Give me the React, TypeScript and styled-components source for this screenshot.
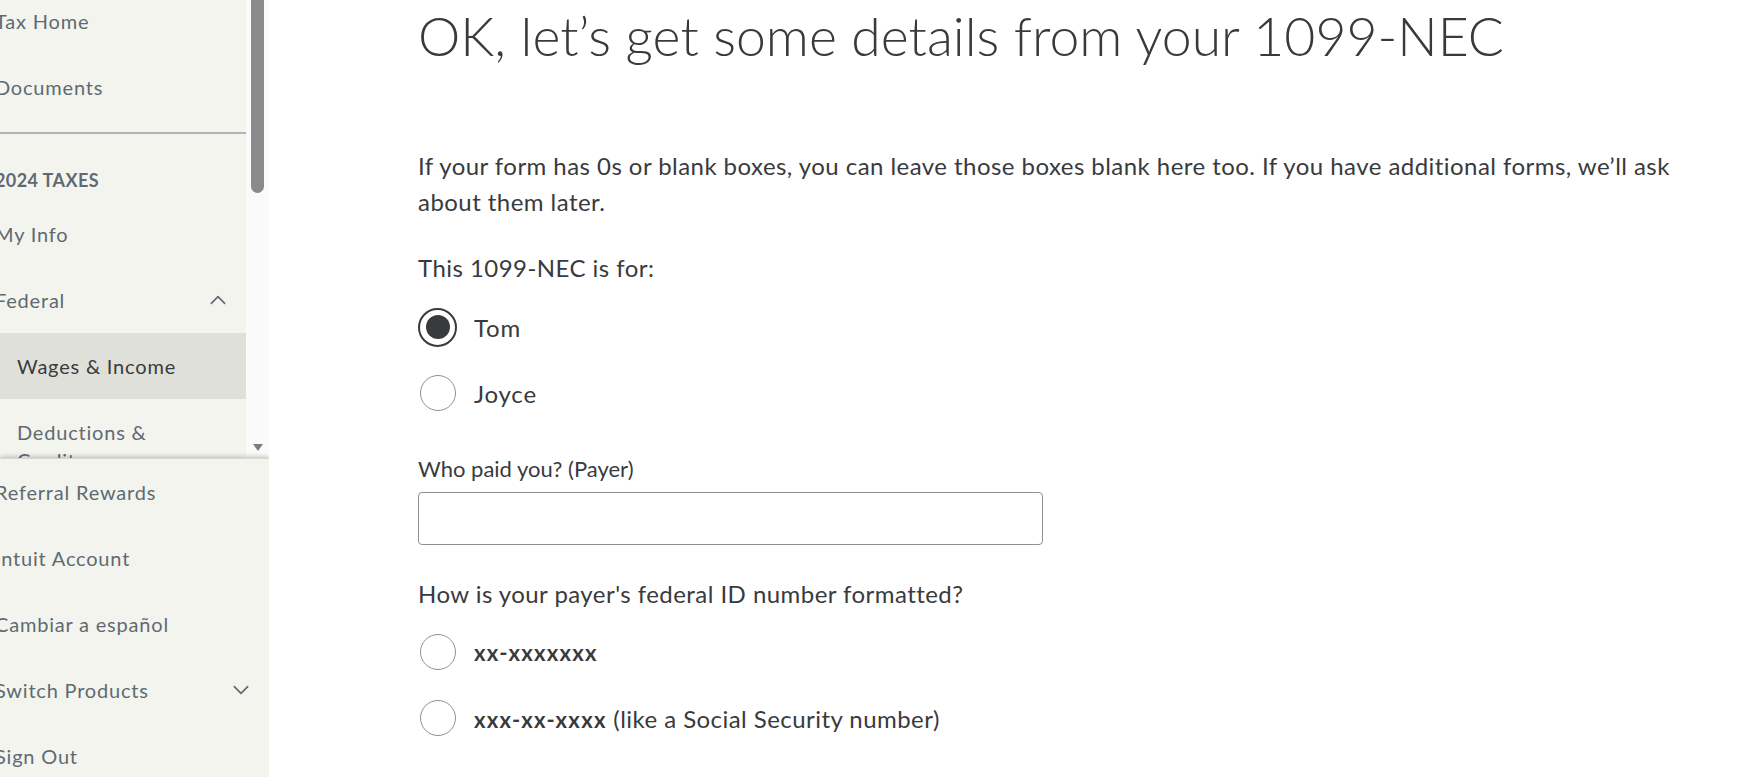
import styled, { createGlobalStyle, css } from "styled-components";

const GlobalStyle = createGlobalStyle`
  body {
    margin: 0;
    font-family: Lato, "Liberation Sans", sans-serif;
    color: #393a3d;
    background: #ffffff;
    overflow: hidden;
  }
`;

const Page = styled.div`
  display: flex;
  height: 100vh;
  overflow: hidden;
`;

/* ---------- sidebar ---------- */

const Sidebar = styled.aside`
  width: 269px;
  flex: none;
  display: flex;
  flex-direction: column;
  background: #f4f4ef;
  overflow: hidden;
`;

const NavScroll = styled.div`
  flex: 0 0 458px;
  display: flex;
  overflow: hidden;
`;

const NavList = styled.ul`
  flex: 1;
  list-style: none;
  margin: -12px 0 0 -5px;
  padding: 0;
`;

const ScrollTrack = styled.div`
  width: 23px;
  flex: none;
  background: #fafafa;
  display: flex;
  flex-direction: column;
  align-items: center;
  justify-content: space-between;
  padding-bottom: 7px;
  box-sizing: border-box;
`;

const Thumb = styled.div`
  width: 13px;
  height: 193px;
  background: #8a8a8a;
  border-radius: 0 0 7px 7px;
`;

const DownArrow = styled.div`
  width: 0;
  height: 0;
  border-left: 5px solid transparent;
  border-right: 5px solid transparent;
  border-top: 7px solid #7d7d7d;
`;

const NavItem = styled.li<{ $indent?: boolean; $active?: boolean }>`
  display: flex;
  align-items: center;
  justify-content: space-between;
  height: 66px;
  padding: 0 18px 0 ${(p) => (p.$indent ? "22px" : "0")};
  font-size: 20px;
  letter-spacing: 0.8px;
  color: #5e6a73;
  white-space: nowrap;
  overflow: hidden;

  ${(p) =>
    p.$active &&
    css`
      background: #e0e0da;
      color: #393a3d;
      margin-left: 5px;
      padding-left: 17px;
    `}
`;

const WrapItem = styled.li`
  height: 66px;
  box-sizing: border-box;
  padding: 19px 70px 0 22px;
  font-size: 20px;
  letter-spacing: 0.8px;
  line-height: 28px;
  color: #5e6a73;
`;

const Divider = styled.li`
  height: 2px;
  background: #aab5bc;
  margin: 12px 0 0 0;
`;

const SectionTitle = styled.li`
  padding: 35px 0 10px;
  line-height: 22px;
  font-size: 18px;
  font-weight: 700;
  letter-spacing: 0.4px;
  color: #5e6a73;
`;

const BottomNav = styled.ul`
  list-style: none;
  margin: 0;
  padding: 0;
  flex: none;
  position: relative;
  box-shadow: 0 -2px 4px rgba(0, 0, 0, 0.18);
  border-top: 1px solid #d6d6d2;

  & > li {
    margin-left: -5px;
    padding-right: 18px;
  }
`;

const Chevron = ({ up }: { up?: boolean }) => (
  <svg width="20" height="20" viewBox="0 0 24 24" fill="none">
    <path
      d={up ? "M4 16l8-8 8 8" : "M4 8l8 8 8-8"}
      stroke="#5e6a73"
      strokeWidth="2"
      strokeLinecap="round"
      strokeLinejoin="round"
    />
  </svg>
);

/* ---------- main ---------- */

const Main = styled.main`
  flex: 1;
  padding: 3px 40px 0 149px;
  min-width: 0;
`;

const Content = styled.div`
  max-width: 1280px;
`;

const Heading = styled.h1`
  margin: 0;
  font-size: 53.5px;
  line-height: 64px;
  font-weight: 300;
  color: #393a3d;
`;

const Intro = styled.p`
  margin: 81px 0 0;
  font-size: 24px;
  line-height: 36px;
  letter-spacing: 0.45px;
  font-weight: 400;
`;

const Question = styled.div<{ $gap: number }>`
  margin-top: ${(p) => p.$gap}px;
  font-size: 24px;
  line-height: 30px;
  letter-spacing: 0.45px;
`;

const RadioGroup = styled.div<{ $gap: number }>`
  margin-top: ${(p) => p.$gap}px;
  display: flex;
  flex-direction: column;
`;

const RadioRow = styled.label`
  display: flex;
  align-items: center;
  gap: 17px;
  height: 66px;
  font-size: 24px;
  letter-spacing: 0.45px;
`;

const RadioBox = styled.span`
  width: 39px;
  height: 39px;
  display: flex;
  align-items: center;
  justify-content: center;
  flex: none;
`;

const RadioCircle = styled.span<{ $checked?: boolean }>`
  box-sizing: border-box;
  border-radius: 50%;
  display: flex;
  align-items: center;
  justify-content: center;
  ${(p) =>
    p.$checked
      ? css`
          width: 39px;
          height: 39px;
          border: 2px solid #393a3d;
        `
      : css`
          width: 36px;
          height: 36px;
          border: 1px solid #8d9096;
        `}
`;

const RadioDot = styled.span`
  width: 24px;
  height: 24px;
  border-radius: 50%;
  background: #393a3d;
`;

const NameLabel = styled.span`
  letter-spacing: 0.8px;
`;

const Code = styled.b`
  font-weight: 700;
  font-size: 22px;
  letter-spacing: 1.3px;
`;

const FieldLabel = styled.div`
  margin-top: 31px;
  font-size: 22px;
  line-height: 24px;
`;

const TextInput = styled.input`
  display: block;
  margin-top: 11px;
  width: 625px;
  height: 53px;
  box-sizing: border-box;
  border: 1px solid #8d9096;
  border-radius: 4px;
  background: #fff;
  font: inherit;
  padding: 0 12px;
`;

const Radio = ({ checked, children }: { checked?: boolean; children: React.ReactNode }) => (
  <RadioRow>
    <RadioBox>
      <RadioCircle $checked={checked}>{checked && <RadioDot />}</RadioCircle>
    </RadioBox>
    {children}
  </RadioRow>
);

const App = () => {
  return (
    <>
      <GlobalStyle />
      <Page>
        <Sidebar>
          <NavScroll>
            <NavList>
              <NavItem>Tax Home</NavItem>
              <NavItem>Documents</NavItem>
              <Divider />
              <SectionTitle>2024 TAXES</SectionTitle>
              <NavItem>My Info</NavItem>
              <NavItem>
                Federal
                <Chevron up />
              </NavItem>
              <NavItem $indent $active>
                Wages &amp; Income
              </NavItem>
              <WrapItem>Deductions &amp; Credits</WrapItem>
            </NavList>
            <ScrollTrack>
              <Thumb />
              <DownArrow />
            </ScrollTrack>
          </NavScroll>
          <BottomNav>
            <NavItem>Referral Rewards</NavItem>
            <NavItem>Intuit Account</NavItem>
            <NavItem>Cambiar a español</NavItem>
            <NavItem>
              Switch Products
              <Chevron />
            </NavItem>
            <NavItem>Sign Out</NavItem>
          </BottomNav>
        </Sidebar>

        <Main>
          <Content>
            <Heading>OK, let’s get some details from your 1099-NEC</Heading>
            <Intro>
              If your form has 0s or blank boxes, you can leave those boxes blank here too. If you
              have additional forms, we’ll ask about them later.
            </Intro>

            <Question $gap={33}>This 1099-NEC is for:</Question>
            <RadioGroup $gap={11}>
              <Radio checked>
                <NameLabel>Tom</NameLabel>
              </Radio>
              <Radio>
                <NameLabel>Joyce</NameLabel>
              </Radio>
            </RadioGroup>

            <FieldLabel>Who paid you? (Payer)</FieldLabel>
            <TextInput type="text" />

            <Question $gap={34}>How is your payer's federal ID number formatted?</Question>
            <RadioGroup $gap={10}>
              <Radio>
                <Code>xx-xxxxxxx</Code>
              </Radio>
              <Radio>
                <span>
                  <Code>xxx-xx-xxxx</Code> (like a Social Security number)
                </span>
              </Radio>
            </RadioGroup>
          </Content>
        </Main>
      </Page>
    </>
  );
};

export default App;
